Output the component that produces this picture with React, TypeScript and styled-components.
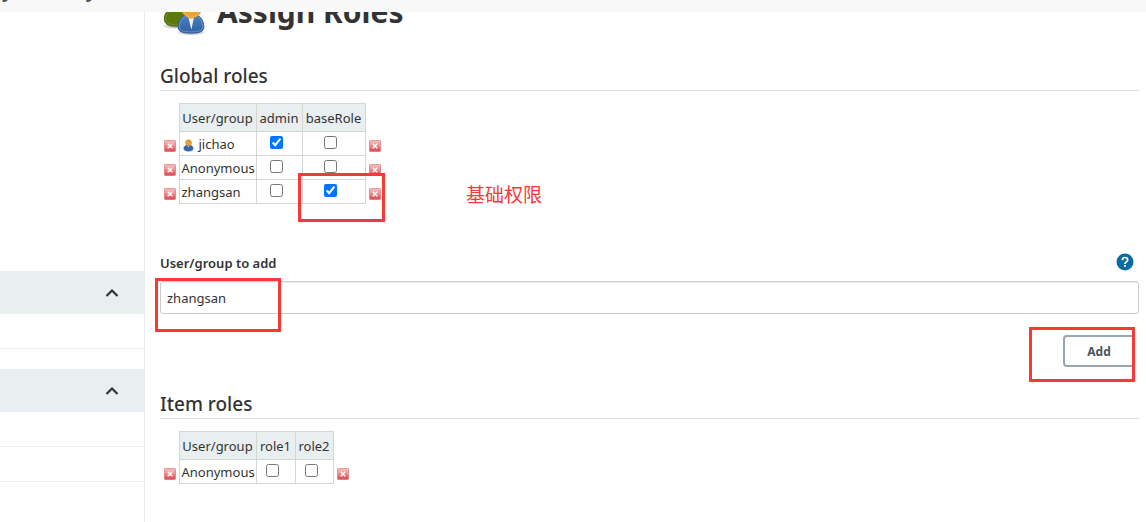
import React from "react";
import styled, { createGlobalStyle } from "styled-components";

const Global = createGlobalStyle`
  *, *::before, *::after { box-sizing: border-box; }
  body {
    margin: 0;
    background: #fff;
    color: #333;
    font-family: "Noto Sans", "Noto Sans CJK SC", sans-serif;
    font-size: 13px;
  }
`;

const Page = styled.div`
  height: 100vh;
  display: flex;
  flex-direction: column;
  overflow: hidden;
`;

const TopBar = styled.header`
  flex: none;
  height: 12px;
  background: #f8f8f8;
  overflow: hidden;
  display: flex;
  align-items: flex-end;
  padding: 0 0 12px 2px;
`;

const Crumb = styled.div`
  font-size: 20px;
  line-height: 20px;
  font-weight: 600;
  color: #4d545d;
  white-space: pre;
`;

const Body = styled.div`
  flex: 1;
  min-height: 0;
  display: flex;
`;

const Side = styled.aside`
  flex: none;
  width: 145px;
  padding-top: 259px;
  border-right: 1px solid #e6eef1;
`;

const PaneHead = styled.button`
  display: flex;
  align-items: center;
  justify-content: flex-end;
  width: 100%;
  height: 43px;
  padding: 0 25px 0 0;
  border: 0;
  background: #e9eef1;
  color: #333;
`;

const PaneRow = styled.div`
  height: 35px;
  border-bottom: 1px solid #e9eef1;
`;

const PaneGap = styled.div`
  height: 20px;
`;

const Main = styled.main`
  flex: 1;
  min-width: 0;
  overflow: hidden;
  padding: 0 7px 0 15px;
`;

const TitleRow = styled.div`
  display: flex;
  align-items: flex-end;
  height: 24px;
  padding-left: 1px;
`;

const Title = styled.h1`
  margin: 0 0 4px 12px;
  font-size: 30px;
  line-height: 40px;
  font-weight: 700;
`;

const Section = styled.h2`
  margin: 0;
  padding-bottom: 1px;
  height: 28px;
  font-size: 19px;
  line-height: 26px;
  font-weight: 500;
  border-bottom: 1px solid #dcdcdc;
`;

const GlobalBlock = styled.section`
  padding-top: 27px;
`;

const ItemBlock = styled.section`
  padding-top: 9px;
`;

const Matrix = styled.table`
  margin-top: 12px;
  border-collapse: collapse;
  white-space: nowrap;
`;

const Cell = styled.td`
  position: relative;
  height: 24px;
  padding: 0;
  border: 1px solid #d3d7cf;
  text-align: center;
  line-height: 20px;
`;

const HeadCell = styled.th<{ $w: number }>`
  width: ${(p) => p.$w}px;
  height: 28px;
  padding: 0;
  border: 1px solid #d3d7cf;
  background: #e9eef1;
  font-weight: 400;
  text-align: center;
`;

const NameCell = styled(Cell)`
  padding-left: 2px;
  text-align: left;
  svg { vertical-align: -3px; margin: 0 5px 0 1px; }
`;

const Edge = styled.td<{ $right?: boolean }>`
  width: 19px;
  padding: ${(p) => (p.$right ? "5px 0 0 3px" : "5px 0 0 4px")};
  border: 0;
`;

const Remove = styled.button`
  display: block;
  width: 12px;
  height: 12px;
  padding: 0;
  border: 0;
  background: none;
  svg { display: block; }
`;

const Check = styled.input`
  display: block;
  width: 13px;
  height: 13px;
  margin: 0 auto;
`;

const CheckSlot = styled.label`
  display: block;
  padding: 0 6px 3px 0;
`;

const Mark = styled.div<{ $t: number; $l: number; $w: number; $h: number }>`
  position: absolute;
  z-index: 2;
  top: ${(p) => p.$t}px;
  left: ${(p) => p.$l}px;
  width: ${(p) => p.$w}px;
  height: ${(p) => p.$h}px;
  border: 3px solid #fc3737;
  pointer-events: none;
`;

const MatrixArea = styled.div`
  position: relative;
`;

const Note = styled.div`
  position: absolute;
  top: 77px;
  left: 306px;
  font: 19px/28px "Noto Sans CJK SC", sans-serif;
  color: #fc3737;
`;

const Form = styled.form`
  padding-top: 47px;
`;

const LabelRow = styled.div`
  display: flex;
  align-items: center;
  justify-content: space-between;
  height: 24px;
  padding-right: 5px;
`;

const FieldLabel = styled.label`
  font-size: 13px;
  line-height: 20px;
  font-weight: 600;
`;

const Help = styled.button`
  width: 18px;
  height: 20px;
  padding: 0 0 2px;
  border: 0;
  background: none;
  svg { display: block; }
`;

const Field = styled.div`
  position: relative;
  margin-top: 6px;
`;

const TextBox = styled.input`
  display: block;
  width: 100%;
  height: 33px;
  padding: 0 6px;
  border: 1px solid #ccc;
  border-radius: 3px;
  box-shadow: inset 0 1px 1px rgba(0, 0, 0, 0.075);
  color: #333;
  font: 13px "Noto Sans", sans-serif;
`;

const Actions = styled.div`
  position: relative;
  width: 106px;
  height: 55px;
  margin: 13px 4px 0 auto;
  padding: 8px 0 0 34px;
  overflow: hidden;
`;

const AddButton = styled.button`
  width: 76px;
  height: 32px;
  padding: 0 4px 0 0;
  border: 2px solid #98a4ae;
  border-radius: 4px;
  background: #fff;
  color: #4d545d;
  font: 700 12px "Noto Sans", sans-serif;
`;

const Chevron = () => (
  <svg width="14" height="10" viewBox="0 0 14 10" fill="none" stroke="#333" strokeWidth="2.2">
    <path d="M1.5 8 7 2.5 12.5 8" />
  </svg>
);

const RemoveIcon = () => (
  <svg width="12" height="12" viewBox="0 0 12 12">
    <defs>
      <linearGradient id="rm" x1="0" y1="0" x2="0" y2="1">
        <stop offset="0" stopColor="#f5c4c4" />
        <stop offset="0.5" stopColor="#ea8b8c" />
        <stop offset="1" stopColor="#dc4347" />
      </linearGradient>
    </defs>
    <rect x="0.5" y="0.5" width="11" height="11" rx="0.8" fill="url(#rm)" stroke="#d9686b" strokeOpacity="0.6" />
    <path d="m3.800 3.800 4.400 4.400m0-4.400L3.800 8.200" stroke="#fff" strokeOpacity="0.9" strokeWidth="1.600" />
  </svg>
);

const UserIcon = () => (
  <svg width="11" height="14" viewBox="0 0 11 14">
    <path d="M.8 10.500C.8 8 2.500 7 5.500 7s4.700 1 4.700 3.500c0 2-1.700 2.700-4.700 2.700S.8 12.500.8 10.500Z" fill="#3465a4" stroke="#5580b5" strokeWidth=".6" />
    <path d="m4.800 7.500.7 2.500.7-2.500Z" fill="#dfe7f0" />
    <circle cx="5.500" cy="4.800" r="3" fill="#e5a23b" stroke="#c98a2b" strokeWidth=".6" />
  </svg>
);

const UsersIcon = () => (
  <svg width="44" height="24" viewBox="0 0 44 24">
    <defs>
      <linearGradient id="blue" x1="0" y1="0" x2="0" y2="1">
        <stop offset="0" stopColor="#4a7fc0" />
        <stop offset="1" stopColor="#2f62a3" />
      </linearGradient>
      <radialGradient id="sh">
        <stop offset="0" stopColor="#000" stopOpacity=".5" />
        <stop offset="1" stopColor="#000" stopOpacity="0" />
      </radialGradient>
    </defs>
    <ellipse cx="15" cy="14" rx="14" ry="3" fill="url(#sh)" />
    <path d="M3.500 5C4 1 7-3 14-3s13 5 13 10-4 7-12 7C7 14 2.500 12 3.500 5Z" fill="#5c7a0c" stroke="#4a6206" />
    <path d="M4.700 6C5.500 1 9-2 14-2s11 5 11 9-5 6-10 6S4 11 4.700 6Z" fill="none" stroke="#7d9632" strokeWidth=".7" />
    <ellipse cx="30" cy="20.500" rx="15" ry="3.200" fill="url(#sh)" />
    <path d="M17.200 14.500C17.500 9 20 4.500 24 3.500h12c4 1 6.500 5.500 6.800 11 .3 5-3.800 6.500-12.800 6.500s-13.100-1.500-12.800-6.500Z" fill="url(#blue)" stroke="#2a5896" />
    <path d="M18.300 14.500C18.700 9.500 21 5.500 24.500 4.600h11c3.500.9 5.800 4.900 6.200 9.900.3 4-3.500 5.400-11.700 5.400s-12-1.400-11.700-5.400Z" fill="none" stroke="#7ba6d9" strokeWidth=".7" />
    <path d="M27.300 5h5.800l-2.700 12.500Z" fill="#eef2f7" />
    <circle cx="30.500" cy="-3.500" r="9.700" fill="#eba33a" stroke="#cf8a20" strokeWidth=".8" />
    <circle cx="30.500" cy="-3.500" r="8.700" fill="none" stroke="#f8bd62" strokeWidth=".8" />
  </svg>
);

type Row = { name: string; user?: boolean; checks: boolean[]; marked?: number };

function RoleMatrix({ roles, widths, rows }: { roles: string[]; widths: number[]; rows: Row[] }) {
  return (
    <Matrix>
      <thead>
        <tr>
          <Edge />
          <HeadCell $w={77}>User/group</HeadCell>
          {roles.map((r, i) => <HeadCell key={r} $w={widths[i]}>{r}</HeadCell>)}
          <Edge $right />
        </tr>
      </thead>
      <tbody>
        {rows.map((row) => (
          <tr key={row.name}>
            <Edge><Remove type="button" aria-label={`Remove ${row.name}`}><RemoveIcon /></Remove></Edge>
            <NameCell>{row.user && <UserIcon />}{row.name}</NameCell>
            {row.checks.map((c, i) => (
              <Cell key={roles[i]}>
                <CheckSlot><Check type="checkbox" defaultChecked={c} aria-label={`${row.name} ${roles[i]}`} /></CheckSlot>
                {row.marked === i && <Mark $t={-7} $l={-5} $w={87} $h={49} />}
              </Cell>
            ))}
            <Edge $right><Remove type="button" aria-label={`Remove ${row.name}`}><RemoveIcon /></Remove></Edge>
          </tr>
        ))}
      </tbody>
    </Matrix>
  );
}

export default function App() {
  return (
    <>
      <Global />
      <Page>
        <TopBar><Crumb>y              y</Crumb></TopBar>
        <Body>
          <Side>
            <PaneHead aria-label="Collapse"><Chevron /></PaneHead>
            <PaneRow />
            <PaneGap />
            <PaneHead aria-label="Collapse"><Chevron /></PaneHead>
            <PaneRow />
            <PaneRow />
          </Side>
          <Main>
            <TitleRow><UsersIcon /><Title>Assign Roles</Title></TitleRow>
            <GlobalBlock>
              <Section>Global roles</Section>
              <MatrixArea>
                <RoleMatrix
                  roles={["admin", "baseRole"]}
                  widths={[46, 63]}
                  rows={[
                    { name: "jichao", user: true, checks: [true, false] },
                    { name: "Anonymous", checks: [false, false] },
                    { name: "zhangsan", checks: [false, true], marked: 1 },
                  ]}
                />
                <Note>基础权限</Note>
              </MatrixArea>
            </GlobalBlock>
            <Form onSubmit={(e) => e.preventDefault()}>
              <LabelRow>
                <FieldLabel htmlFor="sid">User/group to add</FieldLabel>
                <Help type="button" aria-label="Help">
                  <svg width="18" height="18" viewBox="0 0 18 18" fill="none">
                    <circle cx="9" cy="9" r="8.500" fill="#0b6aa2" />
                    <path d="M6.300 7.200C6.300 5.500 7.400 4.500 9 4.500s2.700 1 2.700 2.400c0 1.800-2.700 2-2.700 4" stroke="#fff" strokeWidth="1.700" />
                    <path d="M8.100 12h1.800v1.800H8.100z" fill="#fff" />
                  </svg>
                </Help>
              </LabelRow>
              <Field>
                <TextBox id="sid" defaultValue="zhangsan" />
                <Mark $t={-3} $l={-5} $w={126} $h={54} />
              </Field>
              <Actions>
                <AddButton type="submit">Add</AddButton>
                <Mark $t={0} $l={0} $w={106} $h={55} />
              </Actions>
            </Form>
            <ItemBlock>
              <Section>Item roles</Section>
              <RoleMatrix
                roles={["role1", "role2"]}
                widths={[39, 38]}
                rows={[{ name: "Anonymous", checks: [false, false] }]}
              />
            </ItemBlock>
          </Main>
        </Body>
      </Page>
    </>
  );
}
